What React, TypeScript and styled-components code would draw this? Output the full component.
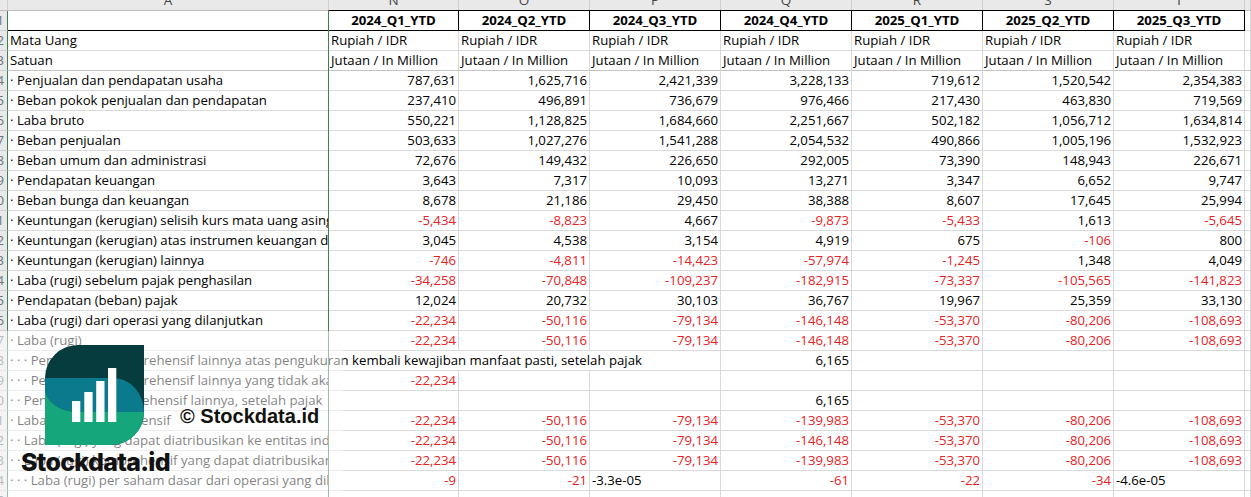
import React from 'react';
import styled, { createGlobalStyle } from 'styled-components';

const GRID = '#dadada';
const GREEN = '#3b7f52';
const RED = '#e8221e';
const FONT = `"Open Sans", "Noto Sans", Arial, sans-serif`;

const GlobalStyle = createGlobalStyle`
  html, body { margin: 0; padding: 0; background: #fff; overflow: hidden; }
  #root { width: 1251px; height: 497px; overflow: hidden; }
`;

const Sheet = styled.div`
  position: relative;
  width: 1251px;
  height: 497px;
  overflow: hidden;
  background: #fff;
  font-family: ${FONT};
  font-size: 13.2px;
  color: #000;
`;

const Grid = styled.div`
  display: grid;
  grid-template-columns: 8px 321px 130px repeat(6, 131px) 1fr;
  grid-template-rows: 21px;
  grid-auto-rows: 20px;
  margin-top: -10px;
`;

const ColHead = styled.div`
  background: #e9e9e9;
  border-right: 1px solid #cfcfcf;
  border-bottom: 1px solid #bdbdbd;
  color: #444;
  font-size: 13.5px;
  text-align: center;
  line-height: 21px;
  overflow: hidden;
  white-space: nowrap;
`;

const RowHead = styled.div`
  display: flex;
  justify-content: flex-end;
  background: #e9e9e9;
  border-right: 1px solid ${GREEN};
  border-bottom: 1px solid #cfcfcf;
  color: #6a7480;
  padding-right: 3px;
  line-height: 19px;
  overflow: hidden;
  white-space: nowrap;
`;

type CellProps = {
  $span?: number;
  $align?: 'left' | 'right' | 'center';
  $neg?: boolean;
  $under?: string;
};

const Cell = styled.div<CellProps>`
  grid-column: span ${(p) => p.$span ?? 1};
  border-right: 1px solid ${GRID};
  border-bottom: 1px solid ${(p) => p.$under ?? GRID};
  padding: 0 2px;
  overflow: hidden;
  white-space: nowrap;
  line-height: 19px;
  text-align: ${(p) => p.$align ?? 'left'};
  color: ${(p) => (p.$neg ? RED : '#000')};
`;

const HeadCell = styled.div`
  border-right: 1px solid #000;
  border-bottom: 1px solid #000;
  box-shadow: 0 -1px 0 #000;
  font-weight: 700;
  text-align: center;
  line-height: 19px;
  overflow: hidden;
  white-space: nowrap;
`;

const FreezeLine = styled.div<{ $left: number }>`
  position: absolute;
  left: ${(p) => p.$left}px;
  top: 10px;
  bottom: 0;
  width: 1px;
  background: ${GREEN};
`;

const Veil = styled.div`
  position: absolute;
  left: 0;
  top: 331px;
  width: 343px;
  height: 166px;
  background: rgba(255, 255, 255, 0.5);
`;

const LogoMark = styled.svg`
  position: absolute;
  left: 45px;
  top: 345px;
  width: 99px;
  height: 100px;
`;

const Copyright = styled.div`
  position: absolute;
  left: 180px;
  top: 406px;
  font-family: "Liberation Sans", Arial, sans-serif;
  font-weight: 700;
  font-size: 20px;
  line-height: 20px;
  color: #111;
  white-space: nowrap;
`;

const Brand = styled.div`
  position: absolute;
  left: 21px;
  top: 450px;
  font-family: Inter, "Liberation Sans", sans-serif;
  font-weight: 800;
  font-size: 25px;
  line-height: 25px;
  letter-spacing: -0.7px;
  color: #111;
  white-space: nowrap;
`;

const periods = ['2024_Q1_YTD', '2024_Q2_YTD', '2024_Q3_YTD', '2024_Q4_YTD', '2025_Q1_YTD', '2025_Q2_YTD', '2025_Q3_YTD'];

type Row = { label: string; values: (string | null)[]; span?: number; under?: string };

const rows: Row[] = [
  { label: 'Mata Uang', values: Array(7).fill('Rupiah / IDR') },
  { label: 'Satuan', values: Array(7).fill('Jutaan / In Million'), under: '#c4c4c4' },
  { label: '· Penjualan dan pendapatan usaha', values: ['787,631', '1,625,716', '2,421,339', '3,228,133', '719,612', '1,520,542', '2,354,383'] },
  { label: '· Beban pokok penjualan dan pendapatan', values: ['237,410', '496,891', '736,679', '976,466', '217,430', '463,830', '719,569'] },
  { label: '· Laba bruto', values: ['550,221', '1,128,825', '1,684,660', '2,251,667', '502,182', '1,056,712', '1,634,814'] },
  { label: '· Beban penjualan', values: ['503,633', '1,027,276', '1,541,288', '2,054,532', '490,866', '1,005,196', '1,532,923'] },
  { label: '· Beban umum dan administrasi', values: ['72,676', '149,432', '226,650', '292,005', '73,390', '148,943', '226,671'] },
  { label: '· Pendapatan keuangan', values: ['3,643', '7,317', '10,093', '13,271', '3,347', '6,652', '9,747'] },
  { label: '· Beban bunga dan keuangan', values: ['8,678', '21,186', '29,450', '38,388', '8,607', '17,645', '25,994'] },
  { label: '· Keuntungan (kerugian) selisih kurs mata uang asing', values: ['-5,434', '-8,823', '4,667', '-9,873', '-5,433', '1,613', '-5,645'] },
  { label: '· Keuntungan (kerugian) atas instrumen keuangan derivatif', values: ['3,045', '4,538', '3,154', '4,919', '675', '-106', '800'] },
  { label: '· Keuntungan (kerugian) lainnya', values: ['-746', '-4,811', '-14,423', '-57,974', '-1,245', '1,348', '4,049'] },
  { label: '· Laba (rugi) sebelum pajak penghasilan', values: ['-34,258', '-70,848', '-109,237', '-182,915', '-73,337', '-105,565', '-141,823'] },
  { label: '· Pendapatan (beban) pajak', values: ['12,024', '20,732', '30,103', '36,767', '19,967', '25,359', '33,130'] },
  { label: '· Laba (rugi) dari operasi yang dilanjutkan', values: ['-22,234', '-50,116', '-79,134', '-146,148', '-53,370', '-80,206', '-108,693'] },
  { label: '· Laba (rugi)', values: ['-22,234', '-50,116', '-79,134', '-146,148', '-53,370', '-80,206', '-108,693'] },
  { label: '· · · Penghasilan komprehensif lainnya atas pengukuran kembali kewajiban manfaat pasti, setelah pajak', values: ['6,165', null, null, null], span: 4 },
  { label: '· · · Penghasilan komprehensif lainnya yang tidak akan direklasifikasi ke laba rugi, setelah pajak', values: ['-22,234', null, null, null, null, null, null] },
  { label: '· · Penghasilan komprehensif lainnya, setelah pajak', values: [null, null, null, '6,165', null, null, null] },
  { label: '· Laba (rugi) komprehensif', values: ['-22,234', '-50,116', '-79,134', '-139,983', '-53,370', '-80,206', '-108,693'] },
  { label: '· · Laba (rugi) yang dapat diatribusikan ke entitas induk', values: ['-22,234', '-50,116', '-79,134', '-146,148', '-53,370', '-80,206', '-108,693'] },
  { label: '· · Laba (rugi) komprehensif yang dapat diatribusikan ke entitas induk', values: ['-22,234', '-50,116', '-79,134', '-139,983', '-53,370', '-80,206', '-108,693'] },
  { label: '· · · Laba (rugi) per saham dasar dari operasi yang dilanjutkan', values: ['-9', '-21', '-3.3e-05', '-61', '-22', '-34', '-4.6e-05'] },
];

const letters = ['A', 'N', 'O', 'P', 'Q', 'R', 'S', 'T', ''];

const isNumber = (v: string) => /^-?[\d,]+$/.test(v);

function ValueCell({ value, under }: { value: string | null; under?: string }) {
  if (value === null) return <Cell $under={under} />;
  if (isNumber(value)) {
    return (
      <Cell $align="right" $neg={value.startsWith('-')} $under={under}>
        {value}
      </Cell>
    );
  }
  return <Cell $under={under}>{value}</Cell>;
}

function Logo() {
  return (
    <LogoMark viewBox="0 0 99 100">
      <defs>
        <clipPath id="leaf">
          <path d="M33 0 H99 V67 A33 33 0 0 1 66 100 H0 V33 A33 33 0 0 1 33 0 Z" />
        </clipPath>
      </defs>
      <g clipPath="url(#leaf)">
        <rect x="0" y="0" width="99" height="100" fill="#073c3e" />
        <path d="M0 33 H68 A31 34 0 0 1 99 67 H33 A33 24 0 0 1 0 43 Z" fill="#0b7a8d" />
        <path d="M0 43 A33 24 0 0 0 33 67 H99 V100 H0 Z" fill="#15a67b" />
      </g>
      <rect x="27" y="56" width="8.3" height="21" fill="#fff" />
      <rect x="39.3" y="47" width="8.3" height="30" fill="#fff" />
      <rect x="51.2" y="36" width="8.3" height="41" fill="#fff" />
      <rect x="63" y="23" width="8.3" height="54" fill="#fff" />
    </LogoMark>
  );
}

export default function App() {
  return (
    <>
      <GlobalStyle />
      <Sheet>
        <Grid>
          <ColHead />
          {letters.map((l, i) => (
            <ColHead key={i}>{l}</ColHead>
          ))}

          <RowHead>
            <span>1</span>
          </RowHead>
          <Cell $under="#000" />
          {periods.map((p) => (
            <HeadCell key={p}>{p}</HeadCell>
          ))}
          <Cell />

          {rows.map((r, i) => (
            <React.Fragment key={i}>
              <RowHead>
                <span>{i + 2}</span>
              </RowHead>
              <Cell $span={r.span} $under={r.under}>
                {r.label}
              </Cell>
              {r.values.map((v, j) => (
                <ValueCell key={j} value={v} under={r.under} />
              ))}
              <Cell $under={r.under} />
            </React.Fragment>
          ))}

          <RowHead>
            <span>25</span>
          </RowHead>
          {Array.from({ length: 9 }).map((_, j) => (
            <Cell key={j} />
          ))}
        </Grid>

        <FreezeLine $left={328} />
        <Veil />
        <Logo />
        <Copyright>© Stockdata.id</Copyright>
        <Brand>Stockdata.id</Brand>
      </Sheet>
    </>
  );
}
